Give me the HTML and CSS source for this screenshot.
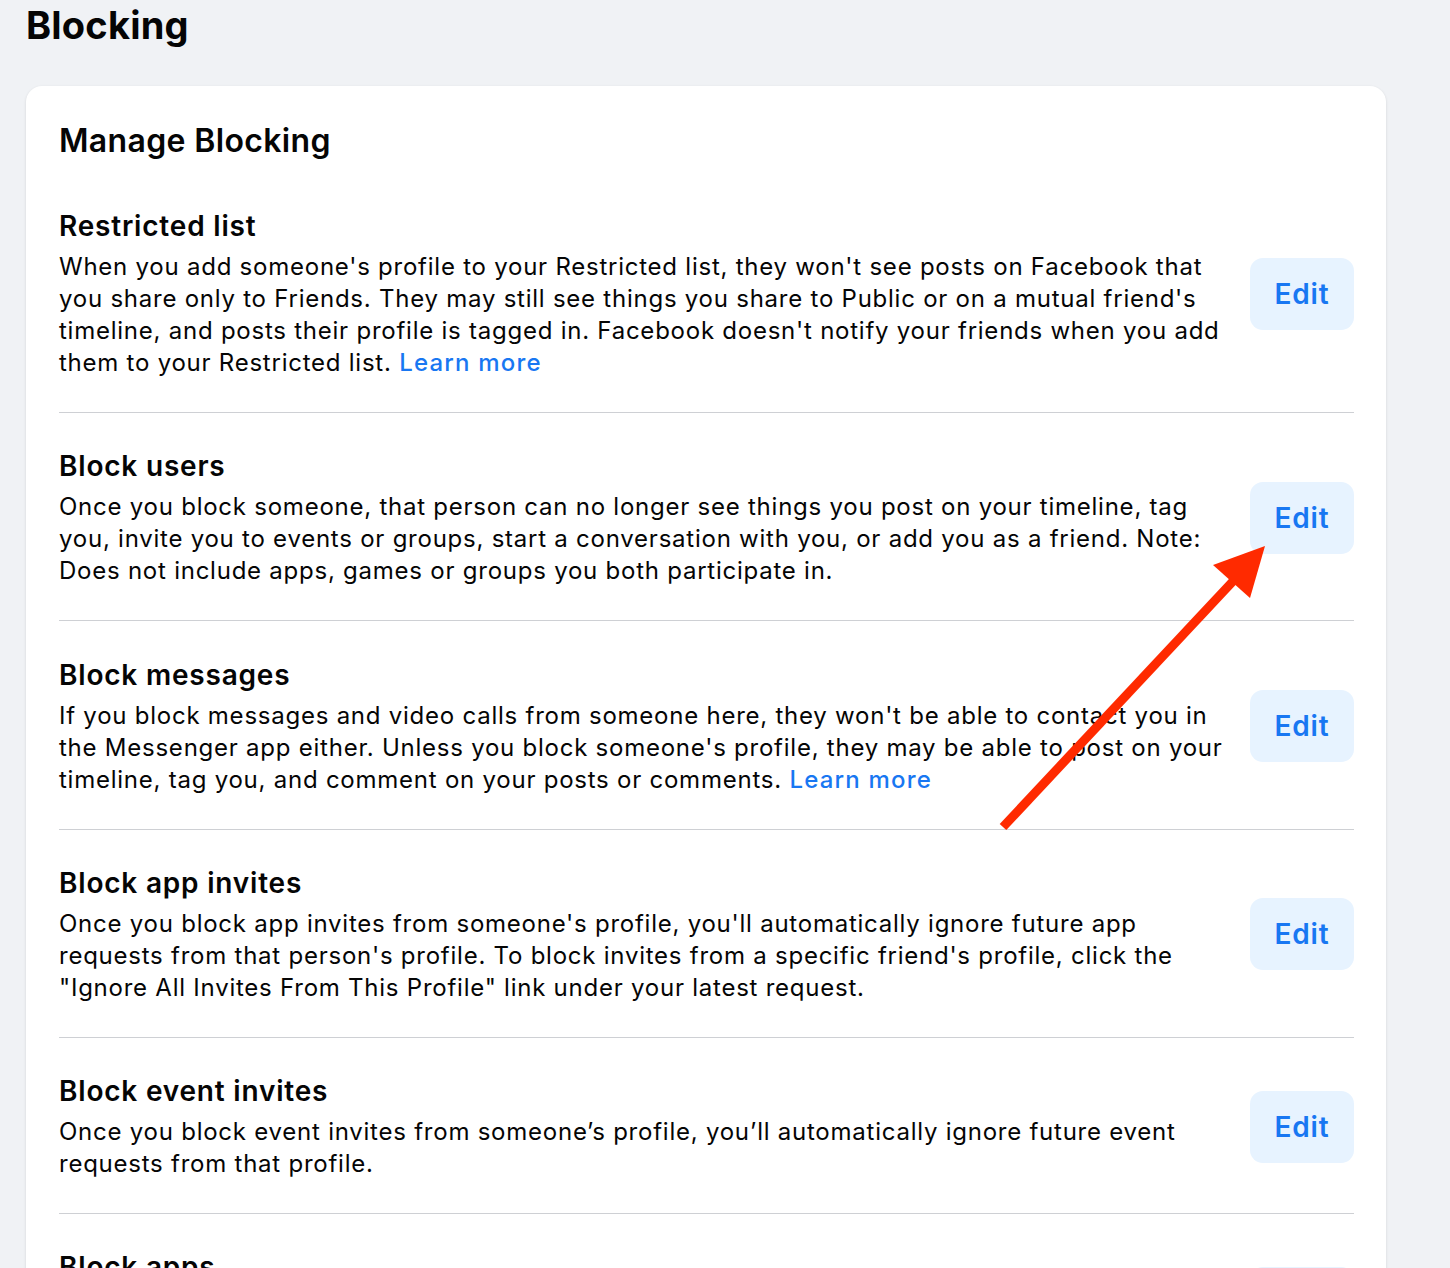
FILE: index.html
```html
<!DOCTYPE html>
<html lang="en">
<head>
<meta charset="utf-8">
<title>Blocking</title>
<link rel="stylesheet" href="styles.css">
</head>
<body>
<div class="page">
  <h1 class="page-title">Blocking</h1>
  <div class="card">
    <h2 class="card-title">Manage Blocking</h2>

    <div class="row">
      <div class="row-text">
        <h3 class="row-title">Restricted list</h3>
        <p class="row-desc">When you add someone's profile to your Restricted list, they won't see posts on Facebook that you share only to Friends. They may still see things you share to Public or on a mutual friend's timeline, and posts their profile is tagged in. Facebook doesn't notify your friends when you add them to your Restricted list. <a class="link" href="#">Learn more</a></p>
      </div>
      <button class="edit-btn">Edit</button>
    </div>

    <div class="row">
      <div class="row-text">
        <h3 class="row-title">Block users</h3>
        <p class="row-desc">Once you block someone, that person can no longer see things you post on your timeline, tag you, invite you to events or groups, start a conversation with you, or add you as a friend. Note: Does not include apps, games or groups you both participate in.</p>
      </div>
      <button class="edit-btn">Edit</button>
    </div>

    <div class="row">
      <div class="row-text">
        <h3 class="row-title">Block messages</h3>
        <p class="row-desc">If you block messages and video calls from someone here, they won't be able to contact you in the Messenger app either. Unless you block someone's profile, they may be able to post on your timeline, tag you, and comment on your posts or comments. <a class="link" href="#">Learn more</a></p>
      </div>
      <button class="edit-btn">Edit</button>
    </div>

    <div class="row">
      <div class="row-text">
        <h3 class="row-title">Block app invites</h3>
        <p class="row-desc">Once you block app invites from someone's profile, you'll automatically ignore future app requests from that person's profile. To block invites from a specific friend's profile, click the "Ignore All Invites From This Profile" link under your latest request.</p>
      </div>
      <button class="edit-btn">Edit</button>
    </div>

    <div class="row">
      <div class="row-text">
        <h3 class="row-title">Block event invites</h3>
        <p class="row-desc">Once you block event invites from someone’s profile, you’ll automatically ignore future event requests from that profile.</p>
      </div>
      <button class="edit-btn">Edit</button>
    </div>

    <div class="row">
      <div class="row-text">
        <h3 class="row-title">Block apps</h3>
        <p class="row-desc">Once you block an app, it can no longer contact you or get non-public information about you through Facebook.</p>
      </div>
      <button class="edit-btn">Edit</button>
    </div>
  </div>
</div>

<svg class="arrow" width="1450" height="1268" viewBox="0 0 1450 1268" aria-hidden="true">
  <line x1="1003" y1="827" x2="1236" y2="578" stroke="#ff2a00" stroke-width="9" />
  <polygon points="1265,546 1213,565 1250,598" fill="#ff2a00" />
</svg>
</body>
</html>
```

FILE: styles.css
```css
html, body {
  margin: 0;
  padding: 0;
  background: #f0f2f5;
  height: 1268px;
  overflow: hidden;
}

body {
  font-family: Inter, "Liberation Sans", Arial, sans-serif;
  color: #050505;
  position: relative;
}

.page {
  padding: 0 64px 0 26px;
}

.page-title {
  margin: 0;
  padding-top: 2px;
  font-size: 38px;
  line-height: 46px;
  font-weight: 700;
  letter-spacing: 0.2px;
  height: 84px;
}

.card {
  width: 1360px;
  box-sizing: border-box;
  background: #fff;
  border-radius: 16px;
  box-shadow: 0 1px 3px rgba(0, 0, 0, 0.12);
  padding: 35px 32px 0 33px;
}

.card-title {
  margin: 0;
  font-size: 32px;
  line-height: 40px;
  font-weight: 600;
  letter-spacing: 0.35px;
  margin-bottom: 47px;
}

.row {
  display: flex;
  align-items: center;
  gap: 24px;
  padding: 35.3px 0 33px;
  border-top: 1px solid #ced0d4;
}

.card-title + .row {
  border-top: none;
  padding-top: 0;
}

.row-text {
  flex: 1;
  min-width: 0;
}

.row-title {
  margin: 0 0 7px;
  font-size: 28px;
  line-height: 36px;
  font-weight: 600;
  letter-spacing: 0.8px;
}

.row-desc {
  margin: 0;
  font-size: 24px;
  line-height: 32px;
  font-weight: 400;
  letter-spacing: 0.76px;
}

.link {
  color: #1877f2;
  text-decoration: none;
  font-weight: 500;
  letter-spacing: 1.2px;
}

.edit-btn {
  flex: none;
  width: 104px;
  height: 72px;
  border: none;
  border-radius: 13px;
  background: #e7f3ff;
  color: #1877f2;
  font-family: inherit;
  font-size: 28px;
  font-weight: 600;
  letter-spacing: 0.8px;
  padding: 0;
  cursor: pointer;
}

.arrow {
  position: absolute;
  left: 0;
  top: 0;
  pointer-events: none;
}
```
